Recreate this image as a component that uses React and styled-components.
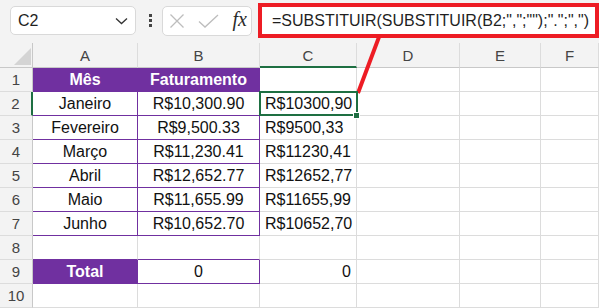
import React from 'react';
import styled, { createGlobalStyle } from 'styled-components';

const PURPLE = '#7030a0';
const GRID = '#dcdcdc';
const GREEN = '#1e6f42';
const HEAD_BG = '#f3f3f3';

const GlobalStyle = createGlobalStyle`
    html, body {
        margin: 0;
        padding: 0;
        background: #ffffff;
    }
    body {
        font-family: "Liberation Sans", Arial, sans-serif;
    }
`;

export const Sheet = styled.div`
    position: relative;
    width: 605px;
    height: 308px;
    overflow: hidden;
    background: #ffffff;
`;

export const TopBar = styled.div`
    box-sizing: border-box;
    width: 599px;
    height: 43px;
    padding: 0 0 2px 10px;
    display: flex;
    align-items: center;
    background: ${HEAD_BG};
`;

export const NameBox = styled.div`
    box-sizing: border-box;
    width: 126px;
    height: 29px;
    padding: 0 7px 0 7px;
    display: flex;
    align-items: center;
    justify-content: space-between;
    background: #ffffff;
    border: 1px solid #d9d9d9;
    border-radius: 5px;
    font-size: 16px;
    color: #1f1f1f;
`;

export const Dots = styled.div`
    width: 3px;
    margin: 0 10px 0 13px;
    display: flex;
    flex-direction: column;
    gap: 2px;
    span {
        width: 3px;
        height: 3px;
        background: #444444;
    }
`;

export const FxBox = styled.div`
    box-sizing: border-box;
    width: 90px;
    height: 30px;
    padding: 0 4px 0 6px;
    display: flex;
    align-items: center;
    justify-content: space-between;
    background: #ffffff;
    border: 1px solid #d9d9d9;
    border-radius: 5px;
`;

export const FxLabel = styled.span`
    font-family: "Liberation Serif", "Times New Roman", serif;
    font-style: italic;
    font-size: 20px;
    color: #2b2b2b;
    margin-top: -3px;
`;

export const FormulaBox = styled.div`
    box-sizing: border-box;
    width: 341px;
    height: 35px;
    margin-left: 6px;
    padding-left: 10px;
    display: flex;
    align-items: center;
    background: #ffffff;
    border: 4px solid #ed1c24;
    font-size: 16px;
    color: #1f1f1f;
    white-space: nowrap;
`;

export const Grid = styled.div`
    display: grid;
    width: 599px;
    grid-template-columns: 33px 105px 122px 97px 103px 81px 58px;
    grid-template-rows: 25px;
    grid-auto-rows: 24px;
`;

export const Corner = styled.div`
    position: relative;
    box-sizing: border-box;
    background: ${HEAD_BG};
    border-right: 1px solid #c8c8c8;
    border-bottom: 1px solid #c8c8c8;
    &::after {
        content: '';
        position: absolute;
        right: 1px;
        bottom: 2px;
        border-style: solid;
        border-width: 0 0 17px 17px;
        border-color: transparent transparent #d4d4d4 transparent;
    }
`;

export const ColHead = styled.div`
    box-sizing: border-box;
    display: flex;
    align-items: center;
    justify-content: center;
    background: ${HEAD_BG};
    border-right: 1px solid ${GRID};
    border-bottom: ${p => (p.$active ? `2px solid ${GREEN}` : '1px solid #c8c8c8')};
    font-size: 15px;
    color: #444444;
    padding-top: ${p => (p.$active ? '1px' : '0')};
`;

export const RowHead = styled.div`
    box-sizing: border-box;
    display: flex;
    align-items: center;
    justify-content: center;
    background: ${HEAD_BG};
    border-right: ${p => (p.$active ? `2px solid ${GREEN}` : '1px solid #c8c8c8')};
    border-bottom: 1px solid ${GRID};
    font-size: 15px;
    color: #444444;
`;

export const Cell = styled.div`
    position: relative;
    box-sizing: border-box;
    display: flex;
    align-items: center;
    justify-content: ${p => p.$align || 'flex-start'};
    padding: 0 5px;
    background: ${p => (p.$fill ? PURPLE : '#ffffff')};
    color: ${p => (p.$fill ? '#ffffff' : '#111111')};
    font-weight: ${p => (p.$bold ? 700 : 400)};
    font-size: 16px;
    white-space: nowrap;
    border-right: 1px solid ${p => (p.$edge ? PURPLE : GRID)};
    border-bottom: 1px solid ${p => (p.$edge || p.$under ? PURPLE : GRID)};

    ${p => p.$selected && `
        &::after {
            content: '';
            position: absolute;
            top: -1px;
            left: -1px;
            right: -2px;
            bottom: -1px;
            border: 2px solid ${GREEN};
            z-index: 2;
        }
        &::before {
            content: '';
            position: absolute;
            right: -4px;
            bottom: -4px;
            width: 5px;
            height: 5px;
            background: ${GREEN};
            border: 1px solid #ffffff;
            z-index: 3;
        }
    `}
`;

export const Callout = styled.svg`
    position: absolute;
    left: 0;
    top: 0;
    pointer-events: none;
`;

const columns = ['A', 'B', 'C', 'D', 'E', 'F'];

const months = [
    ['Janeiro', 'R$10,300.90', 'R$10300,90'],
    ['Fevereiro', 'R$9,500.33', 'R$9500,33'],
    ['Março', 'R$11,230.41', 'R$11230,41'],
    ['Abril', 'R$12,652.77', 'R$12652,77'],
    ['Maio', 'R$11,655.99', 'R$11655,99'],
    ['Junho', 'R$10,652.70', 'R$10652,70'],
];

const Blank = ({ n }) =>
    Array.from({ length: n }, (_, i) => <Cell key={`b${i}`} />);

export class App extends React.Component {
    render() {
        return (
            <React.Fragment>
                <GlobalStyle />
                <Sheet>
                    <TopBar>
                        <NameBox>
                            <span>C2</span>
                            <svg width="13" height="8" viewBox="0 0 13 8">
                                <path d="M1 1.5 L6.5 6.5 L12 1.5" fill="none" stroke="#333" strokeWidth="1.3" />
                            </svg>
                        </NameBox>
                        <Dots><span /><span /><span /></Dots>
                        <FxBox>
                            <svg width="16" height="16" viewBox="0 0 16 16">
                                <path d="M1.5 1.5 L14.5 14.5 M14.5 1.5 L1.5 14.5" stroke="#bdbdbd" strokeWidth="1.3" />
                            </svg>
                            <svg width="21" height="14" viewBox="0 0 21 14">
                                <path d="M1 7.5 L7 13 L20 1" fill="none" stroke="#bdbdbd" strokeWidth="1.3" />
                            </svg>
                            <FxLabel>fx</FxLabel>
                        </FxBox>
                        <FormulaBox>=SUBSTITUIR(SUBSTITUIR(B2;",";"");".";",")</FormulaBox>
                    </TopBar>

                    <Grid>
                        <Corner />
                        {columns.map(c => (
                            <ColHead key={c} $active={c === 'C'}>{c}</ColHead>
                        ))}

                        <RowHead>1</RowHead>
                        <Cell $fill $bold $edge $align="center">Mês</Cell>
                        <Cell $fill $bold $edge $align="center">Faturamento</Cell>
                        <Blank n={4} />

                        {months.map(([m, v, t], i) => (
                            <React.Fragment key={m}>
                                <RowHead $active={i === 0}>{i + 2}</RowHead>
                                <Cell $edge $align="center">{m}</Cell>
                                <Cell $edge $align="center">{v}</Cell>
                                <Cell $selected={i === 0}>{t}</Cell>
                                <Blank n={3} />
                            </React.Fragment>
                        ))}

                        <RowHead>8</RowHead>
                        <Cell $under />
                        <Cell $under />
                        <Blank n={4} />

                        <RowHead>9</RowHead>
                        <Cell $fill $bold $edge $align="center">Total</Cell>
                        <Cell $edge $align="center">0</Cell>
                        <Cell $align="flex-end">0</Cell>
                        <Blank n={3} />

                        <RowHead>10</RowHead>
                        <Blank n={6} />
                    </Grid>

                    <Callout width="605" height="308">
                        <line x1="379" y1="37" x2="358" y2="93" stroke="#ed1c24" strokeWidth="4" />
                    </Callout>
                </Sheet>
            </React.Fragment>
        );
    }
}

export default App;
